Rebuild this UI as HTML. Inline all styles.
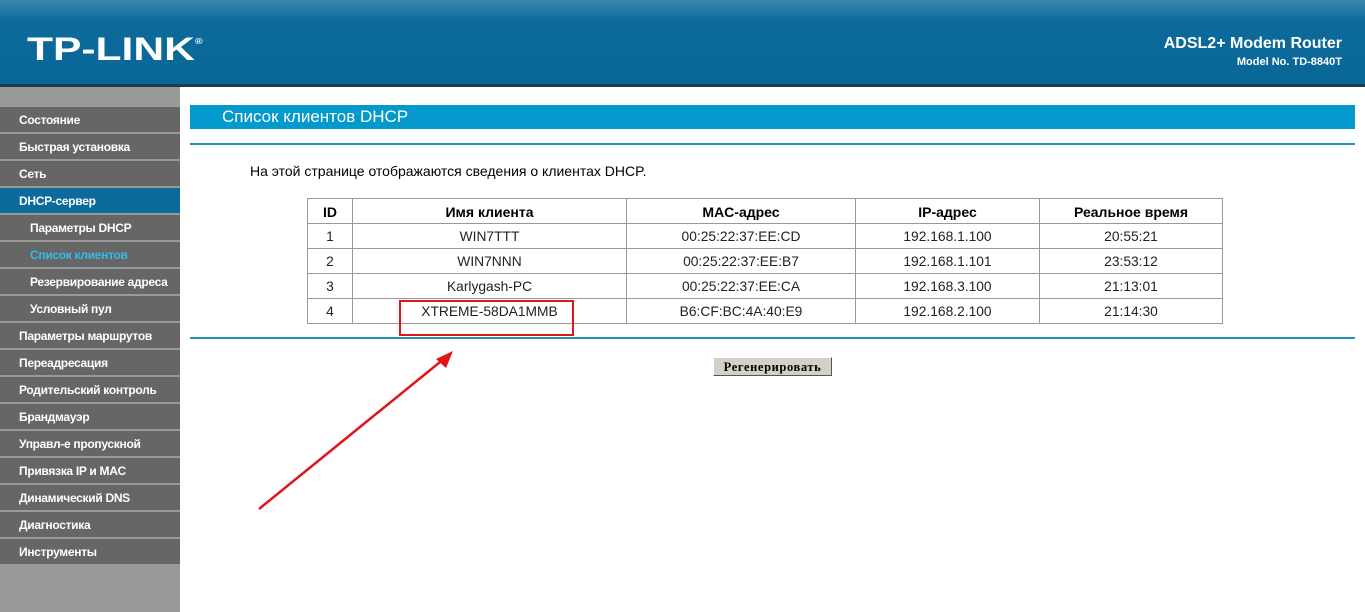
<!DOCTYPE html>
<html><head><meta charset="utf-8"><style>
*{margin:0;padding:0;box-sizing:border-box}
body{width:1365px;height:612px;overflow:hidden;background:#fff;font-family:"Liberation Sans",Arial,sans-serif;position:relative}
#hdr{position:absolute;left:0;top:0;width:1365px;height:84px;background:linear-gradient(180deg,#3d86b0 0%,#0c6a9c 25%,#0a6898 100%)}
#hdr .sh{position:absolute;left:0;top:84px;width:1365px;height:3px;background:#1c3c50}
#logo{position:absolute;left:27px;top:22px;color:#fff;font-weight:bold;font-size:32px;line-height:40px;transform:scaleX(1.33);transform-origin:left}
#r1{position:absolute;right:23px;top:35px;color:#fff;font-weight:bold;font-size:16px}
#r2{position:absolute;right:23px;top:56px;color:#fff;font-weight:bold;font-size:11px}
#side{position:absolute;left:0;top:87px;width:180px;height:525px;background:#999}
.it{position:absolute;left:0;width:180px;height:25px;background:#666;color:#fff;font-weight:bold;font-size:12px;line-height:27px;padding-left:19px;letter-spacing:-0.3px}
.it.sel{background:#0c6a9c}
.it.sub{padding-left:30px}
.it.cur{color:#33bbee}
#tb{position:absolute;left:190px;top:105px;width:1165px;height:24px;background:#0399cc;color:#fff;font-size:17px;line-height:24px;padding-left:32px}
.ln{position:absolute;left:190px;width:1165px;height:2px;background:#2495b9}
#desc{position:absolute;left:250px;top:163px;font-size:14px;color:#000}
table{position:absolute;left:307px;top:198px;width:916px;border-collapse:collapse;font-size:13.8px}
td,th{border:1px solid #999;height:25px;text-align:center;font-weight:normal;color:#222;padding-top:1px}
th{font-weight:bold;font-size:14px;color:#000}
#btn{position:absolute;left:713px;top:357px;width:119px;height:19px;background:#d4d0c8;border:1px solid;border-color:#fff #555 #555 #fff;font-family:"Liberation Serif",serif;font-weight:bold;font-size:12.5px;line-height:18px;text-align:center;letter-spacing:0.6px}
#red{position:absolute;left:399px;top:300px;width:175px;height:36px;border:2px solid #e0141a}
</style></head><body>
<div id="hdr"><div id="logo">TP-LINK<sup style="font-size:8px;vertical-align:16px">®</sup></div><div id="r1">ADSL2+ Modem Router</div><div id="r2">Model No. TD-8840T</div><div class="sh"></div></div>
<div id="side">
<div class="it" style="top:20px">Состояние</div>
<div class="it" style="top:47px">Быстрая установка</div>
<div class="it" style="top:74px">Сеть</div>
<div class="it sel" style="top:101px">DHCP-сервер</div>
<div class="it sub" style="top:128px">Параметры DHCP</div>
<div class="it sub cur" style="top:155px">Список клиентов</div>
<div class="it sub" style="top:182px">Резервирование адреса</div>
<div class="it sub" style="top:209px">Условный пул</div>
<div class="it" style="top:236px">Параметры маршрутов</div>
<div class="it" style="top:263px">Переадресация</div>
<div class="it" style="top:290px">Родительский контроль</div>
<div class="it" style="top:317px">Брандмауэр</div>
<div class="it" style="top:344px">Управл-е пропускной</div>
<div class="it" style="top:371px">Привязка IP и MAC</div>
<div class="it" style="top:398px">Динамический DNS</div>
<div class="it" style="top:425px">Диагностика</div>
<div class="it" style="top:452px">Инструменты</div>
</div>
<div id="tb">Список клиентов DHCP</div>
<div class="ln" style="top:143px"></div>
<div id="desc">На этой странице отображаются сведения о клиентах DHCP.</div>
<table>
<tr><th style="width:45px">ID</th><th style="width:274px">Имя клиента</th><th style="width:229px">MAC-адрес</th><th style="width:184px">IP-адрес</th><th>Реальное время</th></tr>
<tr><td>1</td><td>WIN7TTT</td><td>00:25:22:37:EE:CD</td><td>192.168.1.100</td><td>20:55:21</td></tr>
<tr><td>2</td><td>WIN7NNN</td><td>00:25:22:37:EE:B7</td><td>192.168.1.101</td><td>23:53:12</td></tr>
<tr><td>3</td><td>Karlygash-PC</td><td>00:25:22:37:EE:CA</td><td>192.168.3.100</td><td>21:13:01</td></tr>
<tr><td>4</td><td>XTREME-58DA1MMB</td><td>B6:CF:BC:4A:40:E9</td><td>192.168.2.100</td><td>21:14:30</td></tr>
</table>
<div class="ln" style="top:337px"></div>
<div id="btn">Регенерировать</div>
<div id="red"></div>
<svg style="position:absolute;left:0;top:0" width="1365" height="612"><line x1="259" y1="509" x2="445" y2="358" stroke="#e0141a" stroke-width="2.5"/><polygon points="453,351 436,359 446,368" fill="#e0141a"/></svg>
</body></html>
